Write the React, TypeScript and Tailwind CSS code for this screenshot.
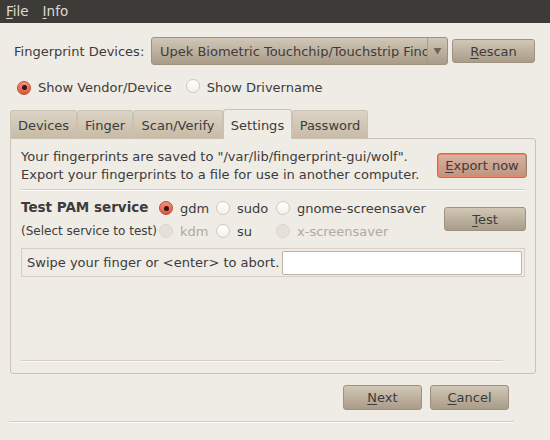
import React from "react";

const font = { fontFamily: '"DejaVu Sans", "Liberation Sans", sans-serif' };

function U({ c }: { c: string }) {
  return <span className="underline underline-offset-2 decoration-1">{c}</span>;
}

function Radio({ checked = false, disabled = false }: { checked?: boolean; disabled?: boolean }) {
  if (checked) {
    return (
      <span className="inline-flex items-center justify-center w-[14px] h-[14px] rounded-full border border-[#b94a36] bg-gradient-to-b from-[#f5907c] to-[#e0533b] shrink-0">
        <span className="w-[5px] h-[5px] rounded-full bg-[#2e1a14]" />
      </span>
    );
  }
  if (disabled) {
    return <span className="inline-block w-[14px] h-[14px] rounded-full border border-[#ddd6cc] bg-[#e6e0d6] shrink-0" />;
  }
  return <span className="inline-block w-[14px] h-[14px] rounded-full border border-[#cfc8bd] bg-gradient-to-b from-[#ffffff] to-[#f3f1ee] shrink-0" />;
}

function Button({ children, className = "", red = false }: { children: React.ReactNode; className?: string; red?: boolean }) {
  return (
    <div
      className={
        "flex items-center justify-center rounded-[3px] border text-[#3c3c3c] " +
        (red
          ? "border-[#9b8270] bg-gradient-to-b from-[#d8b4a3] to-[#c0927d] shadow-[inset_0_0_0_1px_#e8866a] "
          : "border-[#9e917f] bg-gradient-to-b from-[#d2c6b6] to-[#a99c89] ") +
        className
      }
    >
      {children}
    </div>
  );
}

function Tab({ label, active = false, w }: { label: string; active?: boolean; w: string }) {
  if (active) {
    return (
      <div className={"h-[30px] -mb-px z-10 flex items-center justify-center rounded-t-[3px] border border-b-0 border-[#cbc2b2] bg-[#efebe5] " + w}>
        <span className="mt-[1px]">{label}</span>
      </div>
    );
  }
  return (
    <div className={"h-[28px] flex items-center justify-center rounded-t-[3px] border border-b-0 border-[#cbc2b2] bg-gradient-to-b from-[#dcd4c6] to-[#c8bba6] " + w}>
      <span className="mt-[1px]">{label}</span>
    </div>
  );
}

export default function App() {
  return (
    <div className="w-[550px] h-[440px] bg-[#efebe5] text-[#3c3c3c] text-[13px] leading-none flex flex-col overflow-hidden" style={font}>
      {/* menubar */}
      <div className="h-[23px] bg-[#3c3b37] text-[#dfdbd2] flex items-center pl-[6px] gap-[14px] text-[13.5px]">
        <span>
          <U c="F" />ile
        </span>
        <span>
          <U c="I" />nfo
        </span>
      </div>

      <div className="px-[9px] flex flex-col">
        {/* devices row */}
        <div className="mt-[14px] h-[28px] flex items-center">
          <span className="ml-[5px] w-[137px]">Fingerprint Devices:</span>
          <div className="w-[297px] h-[28px] rounded-[3px] border border-[#9e917f] bg-gradient-to-b from-[#d2c6b6] to-[#a99c89] flex items-center overflow-hidden">
            <span className="pl-[8px] whitespace-nowrap overflow-hidden w-[275px]">Upek Biometric Touchchip/Touchstrip Fing</span>
            <div className="h-full border-l border-[#a89a86] flex-1 flex items-center justify-center">
              <svg width="9" height="8" viewBox="0 0 9 8">
                <path d="M0.5 1 L8.5 1 L4.5 7.5 Z" fill="#6e6558" />
              </svg>
            </div>
          </div>
          <Button className="ml-[4px] w-[83px] h-[24px]">
            <span>
              <U c="R" />escan
            </span>
          </Button>
        </div>

        {/* radio row */}
        <div className="mt-[13px] h-[18px] flex items-center">
          <span className="ml-[8px]">
            <Radio checked />
          </span>
          <span className="ml-[7px]">Show Vendor/Device</span>
          <span className="ml-[14px]">
            <Radio />
          </span>
          <span className="ml-[7px]">Show Drivername</span>
        </div>

        {/* tabs */}
        <div className="mt-[13px] flex items-end pl-[1px] h-[29px]">
          <Tab label="Devices" w="w-[67px]" />
          <Tab label="Finger" w="w-[56px]" />
          <Tab label="Scan/Verify" w="w-[90px]" />
          <Tab label="Settings" w="w-[69px]" active />
          <Tab label="Password" w="w-[76px]" />
        </div>

        {/* panel */}
        <div className="ml-[1px] w-[526px] h-[236px] border border-[#cbc2b2] rounded-b-[3px] rounded-tr-[3px] flex flex-col px-[10px]">
          <div className="mt-[11px] flex items-start">
            <div className="flex flex-col gap-[5px] leading-[13px]">
              <span>Your fingerprints are saved to "/var/lib/fingerprint-gui/wolf".</span>
              <span>Export your fingerprints to a file for use in another computer.</span>
            </div>
            <Button red className="ml-auto mr-[-2px] mt-[3px] w-[90px] h-[25px]">
              <span>
                <U c="E" />xport now
              </span>
            </Button>
          </div>
          <div className="mt-[8px] h-px bg-[#d4ccc0] shadow-[0_1px_0_#fbfaf8]" />

          <div className="mt-[10px] flex">
            <div className="flex flex-col">
              <div className="h-[16px] flex items-center whitespace-nowrap">
                <span className="w-[138px] font-bold text-[13.5px]">Test PAM service</span>
                <Radio checked />
                <span className="ml-[7px] w-[36px]">gdm</span>
                <Radio />
                <span className="ml-[7px] w-[39px]">sudo</span>
                <Radio />
                <span className="ml-[7px]">gnome-screensaver</span>
              </div>
              <div className="mt-[7px] h-[16px] flex items-center whitespace-nowrap">
                <span className="w-[138px] text-[12px]">(Select service to test)</span>
                <Radio disabled />
                <span className="ml-[7px] w-[36px] text-[#b2aa9c]">kdm</span>
                <Radio />
                <span className="ml-[7px] w-[39px]">su</span>
                <Radio disabled />
                <span className="ml-[7px] text-[#b2aa9c]">x-screensaver</span>
              </div>
            </div>
            <Button className="ml-auto mr-[-1px] mt-[7px] w-[82px] h-[24px]">
              <span>
                <U c="T" />est
              </span>
            </Button>
          </div>

          <div className="mt-[9px] h-[29px] border border-[#d8cfc2] flex items-center pl-[5px] pr-[2px]">
            <span className="w-[255px] text-[13px] whitespace-nowrap">Swipe your finger or &lt;enter&gt; to abort.</span>
            <div className="flex-1 h-[24px] bg-white border border-[#bdb3a4] rounded-[2px]" />
          </div>

          <div className="flex-1" />
          <div className="mb-[12px] mr-[22px] h-px bg-[#d4ccc0] shadow-[0_1px_0_#fbfaf8]" />
        </div>

        {/* buttons */}
        <div className="mt-[11px] flex justify-end pr-[32px] gap-[8px]">
          <Button className="w-[79px] h-[25px]">
            <span>
              <U c="N" />ext
            </span>
          </Button>
          <Button className="w-[79px] h-[25px]">
            <span>
              <U c="C" />ancel
            </span>
          </Button>
        </div>
        <div className="mt-[11px] mr-[27px] h-px bg-[#d4ccc0] shadow-[0_1px_0_#fbfaf8]" />
      </div>
    </div>
  );
}
